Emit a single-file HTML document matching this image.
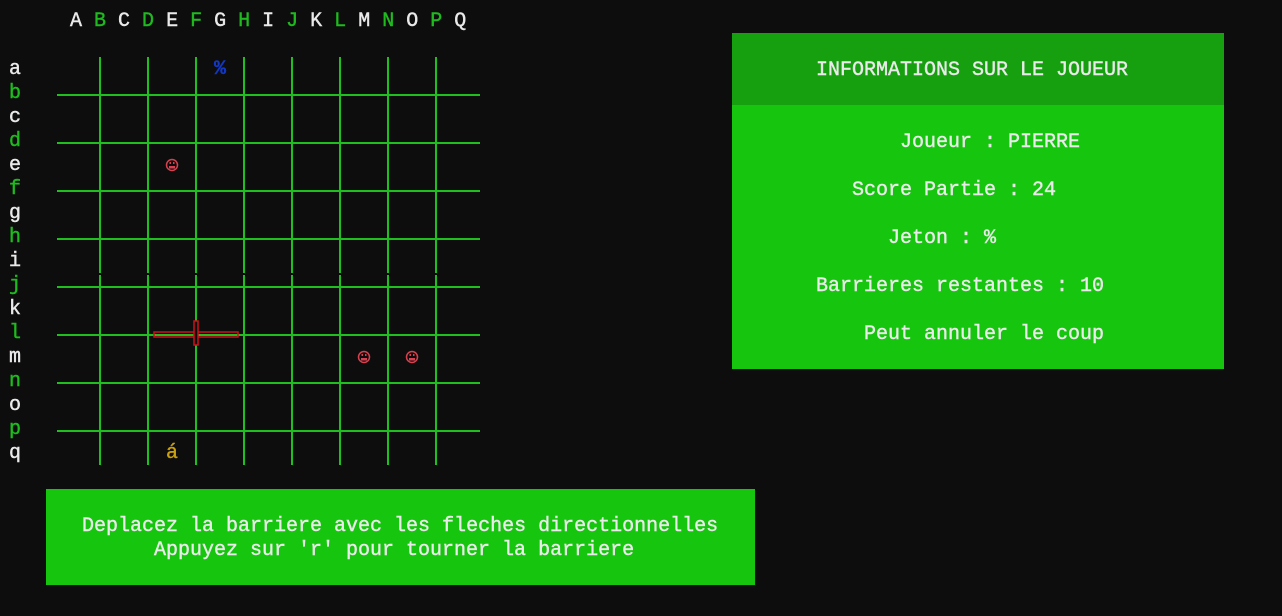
<!DOCTYPE html>
<html><head><meta charset="utf-8"><style>
*{margin:0;padding:0}
body{width:1282px;height:616px;background:#0d0d0d;position:relative;overflow:hidden;font-family:"Liberation Mono","DejaVu Sans Mono",monospace;font-size:20px;color:#eaeaea}
.t{position:absolute;white-space:pre;line-height:24px;-webkit-text-stroke:0.4px currentColor}
.g{color:#1fba1f}
.vl{position:absolute;width:2px;background:#1fbf1f}
.hl{position:absolute;height:2px;background:#1fbf1f;left:57px;width:423px}
</style></head><body>
<div class="t" style="left:70px;top:10px">A <span class="g">B</span> C <span class="g">D</span> E <span class="g">F</span> G <span class="g">H</span> I <span class="g">J</span> K <span class="g">L</span> M <span class="g">N</span> O <span class="g">P</span> Q</div>
<div class="t" style="left:9px;top:58px">a
<span class="g">b</span>
c
<span class="g">d</span>
e
<span class="g">f</span>
g
<span class="g">h</span>
i
<span class="g">j</span>
k
<span class="g">l</span>
m
<span class="g">n</span>
o
<span class="g">p</span>
q</div>

<div class="vl" style="left:99px;top:57px;height:216px"></div><div class="vl" style="left:99px;top:275px;height:190px"></div>
<div class="vl" style="left:147px;top:57px;height:216px"></div><div class="vl" style="left:147px;top:275px;height:190px"></div>
<div class="vl" style="left:195px;top:57px;height:216px"></div><div class="vl" style="left:195px;top:275px;height:190px"></div>
<div class="vl" style="left:243px;top:57px;height:216px"></div><div class="vl" style="left:243px;top:275px;height:190px"></div>
<div class="vl" style="left:291px;top:57px;height:216px"></div><div class="vl" style="left:291px;top:275px;height:190px"></div>
<div class="vl" style="left:339px;top:57px;height:216px"></div><div class="vl" style="left:339px;top:275px;height:190px"></div>
<div class="vl" style="left:387px;top:57px;height:216px"></div><div class="vl" style="left:387px;top:275px;height:190px"></div>
<div class="vl" style="left:435px;top:57px;height:216px"></div><div class="vl" style="left:435px;top:275px;height:190px"></div>
<div class="hl" style="top:94px"></div><div class="hl" style="top:142px"></div><div class="hl" style="top:190px"></div><div class="hl" style="top:238px"></div>
<div class="hl" style="top:286px"></div><div class="hl" style="top:334px"></div><div class="hl" style="top:382px"></div><div class="hl" style="top:430px"></div>

<svg style="position:absolute;left:0;top:0" width="500" height="480">
<rect x="154" y="332" width="84" height="5" fill="none" stroke="#d0101a" stroke-width="1.5"/>
<rect x="194" y="321" width="4" height="24" fill="#0d0d0d" stroke="#d0101a" stroke-width="1.5"/>
<g fill="none" stroke="#d84050" stroke-width="1.5">
<circle cx="172" cy="165" r="5.5"/><circle cx="364" cy="357" r="5.5"/><circle cx="412" cy="357" r="5.5"/>
</g>
<g fill="#d84050">
<rect x="169" y="166" width="6" height="2.5"/><rect x="361" y="358" width="6" height="2.5"/><rect x="409" y="358" width="6" height="2.5"/>
<rect x="169.5" y="162" width="1.5" height="2"/><rect x="173" y="162" width="1.5" height="2"/>
<rect x="361.5" y="354" width="1.5" height="2"/><rect x="365" y="354" width="1.5" height="2"/>
<rect x="409.5" y="354" width="1.5" height="2"/><rect x="413" y="354" width="1.5" height="2"/>
</g>
</svg>
<div class="t" style="left:214px;top:58px;color:#1238c8;font-weight:bold">%</div>
<div class="t" style="left:166px;top:442px;color:#c8a010">á</div>

<div style="position:absolute;left:732px;top:33px;width:492px;height:72px;background:#16a010"></div>
<div style="position:absolute;left:732px;top:105px;width:492px;height:264px;background:#16c60e"></div>
<div class="t" style="left:816px;top:59px">INFORMATIONS SUR LE JOUEUR</div>
<div class="t" style="left:900px;top:131px">Joueur : PIERRE</div>
<div class="t" style="left:852px;top:179px">Score Partie : 24</div>
<div class="t" style="left:888px;top:227px">Jeton : %</div>
<div class="t" style="left:816px;top:275px">Barrieres restantes : 10</div>
<div class="t" style="left:864px;top:323px">Peut annuler le coup</div>

<div style="position:absolute;left:46px;top:489px;width:709px;height:96px;background:#16c60e"></div>
<div class="t" style="left:82px;top:515px">Deplacez la barriere avec les fleches directionnelles</div>
<div class="t" style="left:154px;top:539px">Appuyez sur 'r' pour tourner la barriere</div>
</body></html>
